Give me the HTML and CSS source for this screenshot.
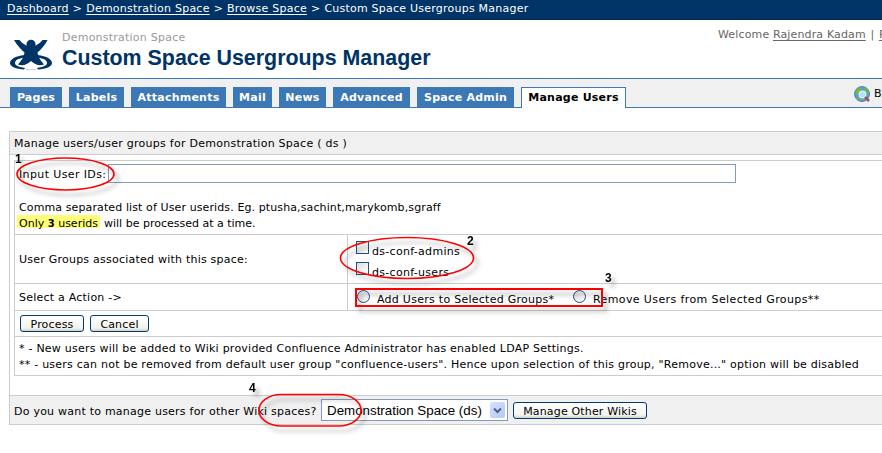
FILE: index.html
```html
<!DOCTYPE html>
<html lang="en">
<head>
<meta charset="utf-8">
<title>Custom Space Usergroups Manager</title>
<link rel="stylesheet" href="styles.css">
</head>
<body>
<div class="page">
<nav class="crumbs"><a href="#">Dashboard</a><span>&gt;</span><a href="#">Demonstration Space</a><span>&gt;</span><a href="#">Browse Space</a><span>&gt;</span><b>Custom Space Usergroups Manager</b></nav>
<header class="header">
<svg class="logo" width="44" height="32" viewBox="0 0 44 32"><path d="M14.500 16C5 17 0 20.500 0 24C0 27.500 6 30 14 30.500L15 29C9 28 5 26.500 5 24C5 21 9 19 15.500 18.500Z"/><path d="M27.500 16C37 17 42 20.500 42 24C42 27.500 36 30 28 30.500L27 29C33 28 37 26.500 37 24C37 21 33 19 26.500 18.500Z"/><circle cx="21" cy="5.200" r="4.500"/><path d="M4 1H9.500C12 4 15.500 6.500 18 7H24C26.500 6.500 30 4 32.500 1H37.500C35 6 31 10.500 27.500 13.500C28 18 30.500 21.500 34 25.500C29 27.500 25 25.500 21 22C17 25.500 13 27.500 8 25.500C11.500 21.500 14 18 14.500 13.500C11 10.500 7 6 4 1Z"/><path d="M16 30.700H26" stroke="#c3d0dd" fill="none"/></svg>
<div class="titles"><div class="space">Demonstration Space</div><h1>Custom Space Usergroups Manager</h1></div>
<div class="welcome">Welcome <a href="#">Rajendra Kadam</a> <i>|</i> <a href="#">P</a></div>
</header>
<div class="tabs">
<a class="tab t1">Pages</a><a class="tab t2">Labels</a><a class="tab t3">Attachments</a><a class="tab t4">Mail</a><a class="tab t5">News</a><a class="tab t6">Advanced</a><a class="tab t7">Space Admin</a><a class="tab t8 active">Manage Users</a>
<div class="browse"><svg width="17" height="17" viewBox="0 0 17 17"><circle cx="8" cy="8" r="7.500" fill="#5a9de0" stroke="#5384bd"/><path d="M2 4L6 1L8 3L5 6L4 9L1 8ZM10 1L14 4L15 9L12 7L10 4ZM3 11L7 13L6 15L3 13Z" fill="#69bf3b"/><circle cx="8.500" cy="8.500" r="3.300" fill="#b9def6" stroke="#e7f2fb" stroke-width="1.300"/><path d="M11 11L15 15" stroke="#a5524b" stroke-width="2.500"/></svg><span>B</span></div>
</div>
<main class="panel">
<div class="panel-head"><span class="x-head">Manage users/user groups for Demonstration Space ( ds )</span></div>
<div class="form">
<div class="row row-ids">
<div class="field"><label class="x-input">Input User IDs:</label><input type="text" aria-label="User IDs"></div>
<p class="x-comma">Comma separated list of User userids. Eg. ptusha,sachint,marykomb,sgraff</p>
<p class="limit"><mark>Only <b>3</b> userids</mark><span>will be processed at a time.</span></p>
</div>
<div class="row row-groups"><div class="cell"><span>User Groups associated with this space:</span></div>
<div class="options"><label><i class="check"></i><span class="x-group">ds-conf-admins</span></label><label><i class="check"></i><span class="x-group">ds-conf-users</span></label></div></div>
<div class="row row-action"><div class="cell"><span>Select a Action -&gt;</span></div>
<div class="radios"><i class="radio"></i><span class="x-add">Add Users to Selected Groups*</span><i class="radio"></i><span class="x-remove">Remove Users from Selected Groups**</span></div></div>
<div class="row row-buttons"><button class="b1">Process</button><button class="b2">Cancel</button></div>
<div class="row row-notes"><p>* - New users will be added to Wiki provided Confluence Administrator has enabled LDAP Settings.</p><p>** - users can not be removed from default user group "confluence-users". Hence upon selection of this group, "Remove..." option will be disabled</p></div>
</div>
<div class="panel-foot"><span class="q">Do you want to manage users for other Wiki spaces?</span><div class="select"><span>Demonstration Space (ds)</span><i><svg width="9" height="7" viewBox="0 0 9 7"><path d="M1 1.500L4.500 5L8 1.500" fill="none" stroke="#4d6185" stroke-width="2"/></svg></i></div><button class="b3">Manage Other Wikis</button></div>
</main>
<svg class="marks" width="882" height="453" viewBox="0 0 882 453">
<defs><filter id="s" x="-20%" y="-30%" width="150%" height="180%"><feDropShadow dx="4" dy="5" stdDeviation="2" flood-color="#000" flood-opacity=".3"/></filter></defs>
<g filter="url(#s)" fill="none" stroke="#f00">
<ellipse cx="65.500" cy="174" rx="48.500" ry="16" stroke-width="1.600"/>
<ellipse cx="407" cy="258" rx="66.500" ry="20.500" stroke-width="1.600"/>
<rect x="356" y="289" width="246" height="17" stroke-width="2"/>
<rect x="259" y="394.500" width="102" height="31.500" rx="22" ry="16" stroke-width="1.600"/>
</g>
<g filter="url(#s)" class="nums"><text x="15" y="163">1</text><text x="467" y="245">2</text><text x="605" y="282">3</text><text x="249" y="392">4</text></g>
</svg>
</div>
</body>
</html>
```
FILE: styles.css
```css
* { box-sizing: border-box; }
body { margin: 0; background: #fff; color: #000; font: 11px/16px "DejaVu Sans", sans-serif; letter-spacing: .23px; }
.page { position: relative; width: 882px; height: 453px; overflow: hidden; white-space: nowrap; }
p, h1 { margin: 0; }
.crumbs { height: 20px; background: #036; color: #fff; padding: 1px 0 0 7px; display: flex; gap: 4px; line-height: 16px; border-bottom: 1px solid #002a59; }
.crumbs a { color: #fff; text-underline-offset: 2px; }
.crumbs b { font-weight: normal; }
.header { height: 59px; border-bottom: 1px solid #3c78b5; display: flex; padding: 9px 0 0 10px; }
.logo { margin-top: 10px; fill: #036; flex: none; }
.titles { margin-left: 8px; width: 656px; flex: none; }
.space { color: #999; line-height: 16px; padding-top: 1px; }
h1 { color: #036; font: bold 21.4px/25px "Liberation Sans", sans-serif; letter-spacing: 0; }
.welcome { color: #666; line-height: 12px; letter-spacing: .14px; }
.welcome a { color: #666; text-underline-offset: 2px; }
.welcome i { font-style: normal; margin: 0 1px; }
.tabs { height: 29px; background: #f0f0f0; border-bottom: 1px solid #3c78b5; padding: 8px 0 0 10px; display: flex; gap: 7px; }
.tab { height: 20px; background: #3c78b5; color: #fff; font-weight: bold; line-height: 22px; text-align: center; flex: none; }
.tab.active { height: 21px; background: #fff; color: #000; border: 1px solid #3c78b5; border-bottom: 0; line-height: 20px; }
.t1 { width: 52px; }
.t2 { width: 55px; }
.t3 { width: 95px; }
.t4 { width: 39px; }
.t5 { width: 47px; }
.t6 { width: 77px; }
.t7 { width: 97px; }
.t8 { width: 105px; }
.browse { display: flex; gap: 3px; margin-left: 221px; margin-top: -2px; letter-spacing: 0; }
.browse svg { flex: none; margin-top: 1px; }
.browse span { padding-top: 1px; }
.panel { width: 900px; margin: 23px 0 0 9px; border: 1px solid #ccc; }
.panel-head { height: 23px; background: #f0f0f0; border-bottom: 1px solid #ccc; padding-left: 4px; line-height: 23px; }
.x-head { letter-spacing: .26px; }
.form { margin: 5px 0 19px 4px; border: 1px solid #ccc; border-right: 0; }
.row + .row { border-top: 1px solid #ccc; }
.row-ids { height: 73px; padding: 3px 0 0 4px; }
.field { display: flex; height: 19px; margin-bottom: 17px; line-height: 21px; }
.field label { width: 89px; }
.x-input { letter-spacing: .38px; }
.x-comma { letter-spacing: .11px; }
.field input { width: 628px; height: 19px; padding: 0 3px; border: 1px solid #7f9db9; background: #fff; font: inherit; }
mark { height: 13px; line-height: 18px; background: #ff7; color: #000; margin: -1px 0 0 -2px; padding-left: 2px; width: 83px; }
mark b { font-size: 10px; }
.limit { display: flex; gap: 4px; letter-spacing: 0; line-height: 16px; }
.row-groups { height: 49px; display: flex; }
.cell { width: 333px; padding-left: 4px; border-right: 1px solid #ccc; line-height: 49px; flex: none; }
.options { padding: 6px 0 0 8px; }
.options label { display: flex; height: 21px; gap: 3px; line-height: 21px; }
.x-group { letter-spacing: .3px; }
.check { width: 13px; height: 13px; border: 1px solid #1c5180; background: linear-gradient(135deg, #ddd, #fff); }
.row-action { height: 27px; display: flex; }
.row-action .cell { line-height: 27px; }
.radios { display: flex; padding: 6px 0 0 9px; line-height: 19px; }
.radio { width: 13px; height: 13px; border: 1px solid #1c5180; border-radius: 50%; background: linear-gradient(135deg, #ddd, #fff); margin-right: 7px; flex: none; }
.x-add { width: 196px; flex: none; letter-spacing: .27px; }
.x-remove { letter-spacing: .39px; }
.row-buttons { height: 26px; padding: 4px 0 0 5px; display: flex; gap: 6px; }
button { height: 17px; border: 1px solid #003c74; border-radius: 3px; background: linear-gradient(#fff, #f3f3ee 80%, #d6d0c5); color: #000; font: inherit; line-height: 16px; padding: 1px 0 0; letter-spacing: .16px; }
.b1 { width: 64px; }
.b2 { width: 59px; }
.b3 { width: 134px; margin-top: 6px; }
.row-notes { height: 39px; padding: 4px 0 0 4px; letter-spacing: .235px; }
.panel-foot { height: 29px; background: #f0f0f0; border-top: 1px solid #ccc; padding-left: 4px; display: flex; }
.q { width: 307px; line-height: 31px; }
.select { width: 187px; height: 22px; margin: 3px 5px 0 0; border: 1px solid #7f9db9; background: #fff; display: flex; justify-content: space-between; padding: 2px 2px 2px 5px; font: 13.33px/17px "Liberation Sans", sans-serif; letter-spacing: 0; }
.select i { width: 15px; height: 16px; background: linear-gradient(135deg, #d5e0fd, #b5caf7); border-radius: 2px; display: flex; align-items: center; justify-content: center; }
.marks { position: absolute; left: 0; top: 0; }
.nums { font: bold 12px "Liberation Sans", sans-serif; letter-spacing: 0; }
```
